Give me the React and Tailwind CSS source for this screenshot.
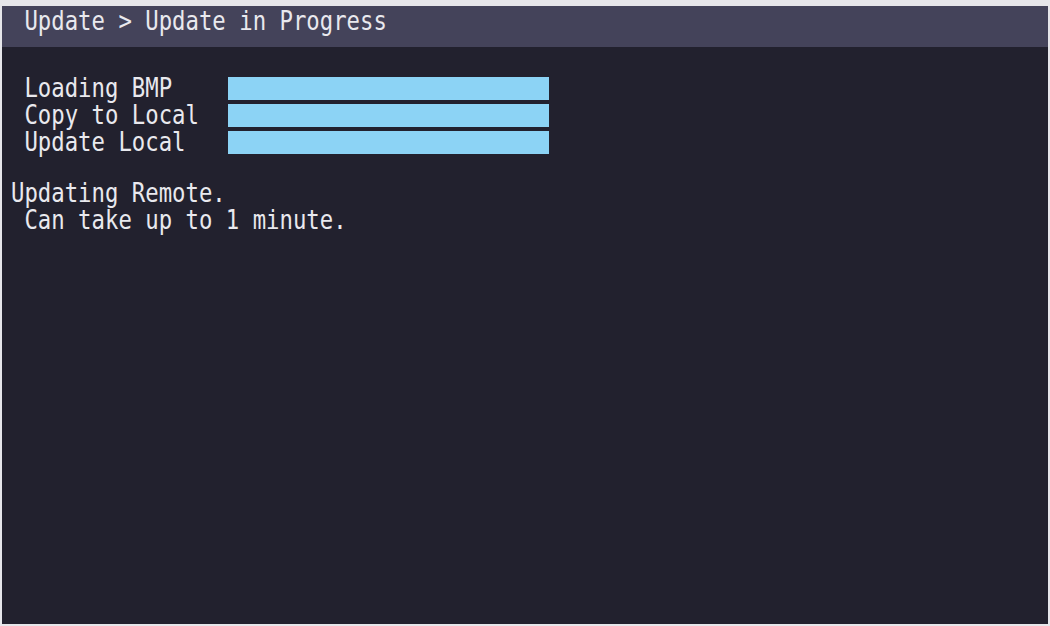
const mono = { fontFamily: '"DejaVu Sans Mono", "Liberation Mono", monospace' };

// glyphs drawn at 22.3px so the cells are 13.4px wide, then stretched up to the tall look of the screen font
function Line({ children, className = "" }) {
  return (
    <div
      className={"h-[27px] origin-left scale-y-[1.17] whitespace-pre text-[22.3px] leading-[27px] " + className}
      style={mono}
    >
      {children}
    </div>
  );
}

const steps = ["Loading BMP", "Copy to Local", "Update Local"];

export default function App() {
  return (
    <div className="h-[626px] w-[1050px] bg-[#e6e6ea] pb-[2px] pl-[2px] pr-[2px] pt-[6px]">
      <div className="flex h-full flex-col bg-[#22212e] text-[#e9e9ee]">
        <div className="h-[41px] bg-[#44435a] pl-[9px] pt-[1.5px]">
          <Line>{" Update > Update in Progress"}</Line>
        </div>

        <div className="pl-[9px] pt-[27.5px]">
          {steps.map((s) => (
            <div key={s} className="flex h-[27px] items-center">
              <div className="w-[217px]">
                <Line>{" " + s}</Line>
              </div>
              <div className="h-[23px] w-[321px] bg-[#8cd3f5]" />
            </div>
          ))}

          <div className="pt-[24px]">
            <Line>Updating Remote.</Line>
            <Line>{" Can take up to 1 minute."}</Line>
          </div>
        </div>
      </div>
    </div>
  );
}
